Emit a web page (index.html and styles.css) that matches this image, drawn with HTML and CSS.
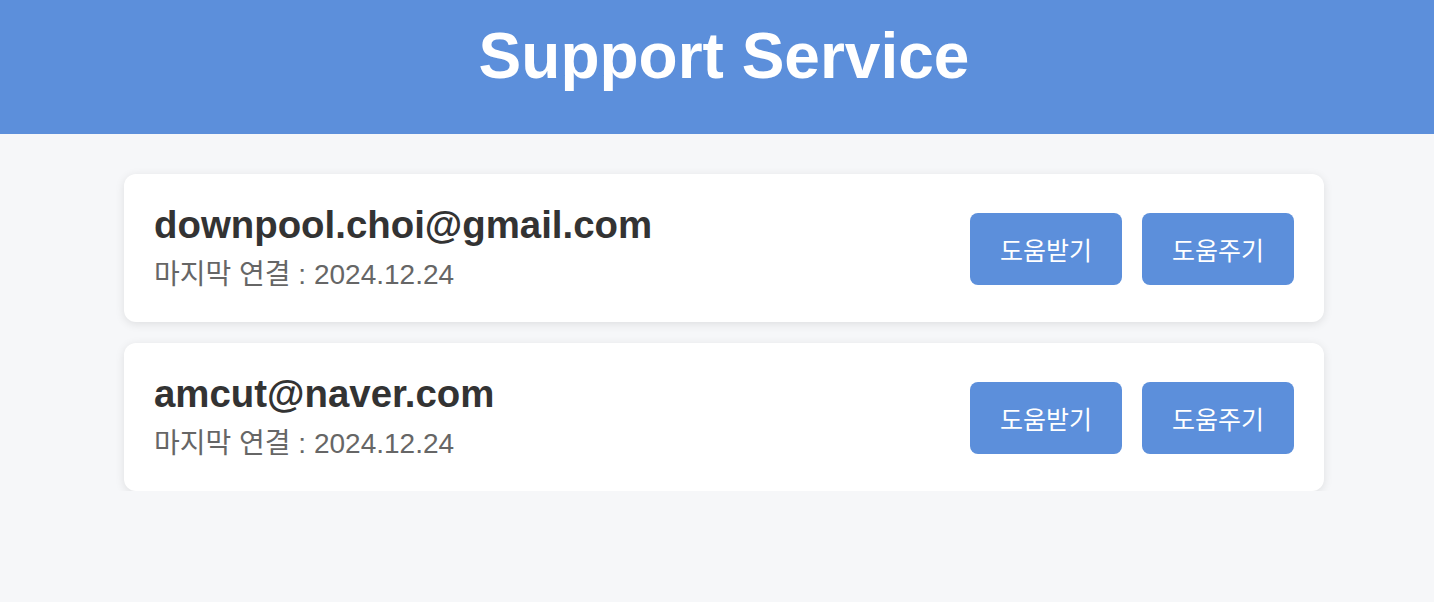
FILE: index.html
```html
<!DOCTYPE html>
<html lang="ko">
<head>
<meta charset="utf-8">
<title>Support Service</title>
<link rel="stylesheet" href="styles.css">
</head>
<body>
<header class="header">
  <h1 class="title">Support Service</h1>
</header>
<main class="list">
  <div class="card">
    <div class="info">
      <div class="email">downpool.choi@gmail.com</div>
      <div class="last">마지막 연결 : 2024.12.24</div>
    </div>
    <div class="actions">
      <button class="btn">도움받기</button>
      <button class="btn">도움주기</button>
    </div>
  </div>
  <div class="card">
    <div class="info">
      <div class="email">amcut@naver.com</div>
      <div class="last">마지막 연결 : 2024.12.24</div>
    </div>
    <div class="actions">
      <button class="btn">도움받기</button>
      <button class="btn">도움주기</button>
    </div>
  </div>
</main>
</body>
</html>
```

FILE: styles.css
```css
* { box-sizing: border-box; }
html, body {
  margin: 0;
  padding: 0;
  background: #f6f7f9;
  font-family: "Liberation Sans", "Noto Sans CJK KR", Arial, sans-serif;
}
.header {
  background: #5c8fdb;
  height: 134px;
  display: flex;
  align-items: center;
  justify-content: center;
  padding-left: 14px;
}
.title {
  margin: 0;
  color: #fff;
  font-size: 64px;
  font-weight: bold;
  line-height: 1;
  padding-bottom: 22px;
}
.list {
  width: 1200px;
  margin: 40px 0 0 124px;
  display: flex;
  flex-direction: column;
  gap: 21px;
}
.card {
  background: #fff;
  border-radius: 12px;
  box-shadow: 0 2px 10px rgba(0, 0, 0, 0.1);
  height: 148px;
  padding: 0 30px;
  display: flex;
  align-items: center;
  justify-content: space-between;
}
.info {
  display: flex;
  flex-direction: column;
  gap: 12px;
}
.email {
  font-size: 38.4px;
  font-weight: bold;
  color: #333;
  line-height: 42px;
}
.last {
  font-size: 28px;
  color: #666;
  line-height: 34px;
}
.actions {
  display: flex;
  gap: 20px;
  padding-top: 2px;
}
.btn {
  width: 152px;
  height: 72px;
  border: none;
  border-radius: 8px;
  background: #5c8fdb;
  color: #fff;
  font-family: "Liberation Sans", "Noto Sans CJK KR", sans-serif;
  font-size: 25px;
  cursor: pointer;
}
```
